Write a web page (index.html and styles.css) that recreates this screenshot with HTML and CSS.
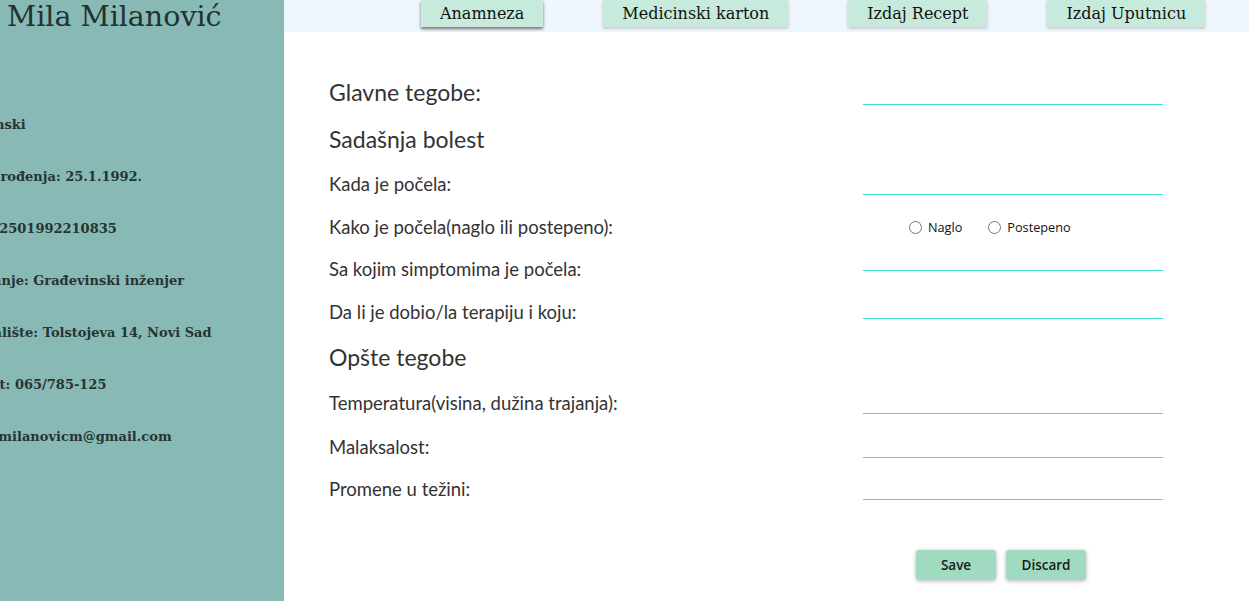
FILE: index.html
```html
<!DOCTYPE html>
<html lang="sr">
<head>
<meta charset="utf-8">
<title>Anamneza</title>
<link rel="stylesheet" href="styles.css">
</head>
<body>
<div class="page">
  <aside class="sidebar">
    <h1 class="patient-name">Mila Milanović</h1>
    <ul class="info">
      <li>Pol: ženski</li>
      <li>Datum rođenja: 25.1.1992.</li>
      <li>JMBG: 2501992210835</li>
      <li>Zanimanje: Građevinski inženjer</li>
      <li>Prebivalište: Tolstojeva 14, Novi Sad</li>
      <li>Kontakt: 065/785-125</li>
      <li>Email: milanovicm@gmail.com</li>
    </ul>
  </aside>
  <main class="main">
    <nav class="tabs">
      <a class="tab tab--active" href="#">Anamneza</a>
      <a class="tab" href="#">Medicinski karton</a>
      <a class="tab" href="#">Izdaj Recept</a>
      <a class="tab" href="#">Izdaj Uputnicu</a>
    </nav>
    <form class="form">
      <div class="row row--r1">
        <label class="label label--big">Glavne tegobe:</label>
        <input class="field" type="text">
      </div>
      <div class="row row--r2">
        <span class="label label--big">Sadašnja bolest</span>
      </div>
      <div class="row row--r3">
        <label class="label">Kada je počela:</label>
        <input class="field" type="text">
      </div>
      <div class="row row--r4">
        <span class="label">Kako je počela(naglo ili postepeno):</span>
        <div class="radios">
          <label class="radio"><input type="radio" name="pocetak"> Naglo</label>
          <label class="radio"><input type="radio" name="pocetak"> Postepeno</label>
        </div>
      </div>
      <div class="row row--r5">
        <label class="label">Sa kojim simptomima je počela:</label>
        <input class="field field--up2" type="text">
      </div>
      <div class="row row--r6">
        <label class="label">Da li je dobio/la terapiju i koju:</label>
        <input class="field field--up1" type="text">
      </div>
      <div class="row row--r7">
        <span class="label label--big">Opšte tegobe</span>
      </div>
      <div class="row row--r8">
        <label class="label">Temperatura(visina, dužina trajanja):</label>
        <input class="field" type="text">
      </div>
      <div class="row row--r9">
        <label class="label">Malaksalost:</label>
        <input class="field" type="text">
      </div>
      <div class="row row--r10">
        <label class="label">Promene u težini:</label>
        <input class="field" type="text">
      </div>
      <div class="actions">
        <button class="btn" type="button">Save</button>
        <button class="btn" type="button">Discard</button>
      </div>
    </form>
  </main>
</div>
</body>
</html>
```
FILE: styles.css
```css
html, body {
  margin: 0;
  padding: 0;
  background: #ffffff;
}

.page {
  display: flex;
  height: 601px;
  overflow: hidden;
}

.sidebar {
  width: 284px;
  flex: 0 0 284px;
  background: #88b9b4;
  overflow: hidden;
  color: #263433;
  font-family: "DejaVu Serif", "Liberation Serif", serif;
}

.patient-name {
  margin: 0;
  padding-left: 7px;
  font-size: 28.5px;
  line-height: 34px;
  font-weight: normal;
  color: #223231;
  white-space: nowrap;
}

.info {
  list-style: none;
  margin: 65px 0 0 -53px;
  padding: 0;
}

.info li {
  height: 52px;
  line-height: 52px;
  font-size: 13px;
  font-weight: bold;
  white-space: nowrap;
}

.main {
  flex: 1;
  display: flex;
  flex-direction: column;
}

.tabs {
  height: 32px;
  background: #eef6fe;
  display: flex;
  align-items: flex-start;
  gap: 60px;
  padding-left: 137px;
}

.tab {
  display: block;
  height: 27px;
  box-sizing: border-box;
  padding: 0 18px;
  line-height: 27px;
  background: #c6eadb;
  border: 1px solid #d7e6df;
  border-top: none;
  color: #111;
  text-decoration: none;
  font-family: "DejaVu Serif", "Liberation Serif", serif;
  font-size: 16px;
  box-shadow: 0 1px 3px rgba(0, 0, 0, 0.25);
  white-space: nowrap;
}

.tab--active {
  box-shadow: 0 2px 3px rgba(0, 0, 0, 0.55);
}

.form {
  padding: 36px 0 0 45px;
  font-family: Lato, "Noto Sans", sans-serif;
  color: #333333;
}

.row {
  display: flex;
  align-items: center;
}

.row--r1 { height: 47px; }
.row--r2 { height: 47px; }
.row--r3 { height: 44px; }
.row--r4 { height: 42px; }
.row--r5 { height: 42px; }
.row--r6 { height: 44px; }
.row--r7 { height: 45px; }
.row--r8 { height: 47px; }
.row--r9 { height: 42px; }
.row--r10 { height: 42px; }

.label {
  width: 534px;
  flex: 0 0 534px;
  font-size: 18.5px;
}

.label--big {
  font-size: 23px;
}

.field {
  width: 300px;
  height: 22px;
  box-sizing: border-box;
  border: none;
  border-bottom: 1px solid #40e0d0;
  padding: 0;
  outline: none;
  background: transparent;
}

.row--r1 .field {
  margin-top: 4px;
}

.field--up2 {
  margin-bottom: 18px;
}

.field--up1 {
  margin-bottom: 8px;
}

.radios {
  display: flex;
  align-items: center;
  gap: 21px;
  padding-left: 41px;
  font-family: "Open Sans", "Noto Sans", sans-serif;
  font-size: 12.7px;
  color: #111;
}

.radio {
  display: flex;
  align-items: center;
}

.radio input {
  margin: 0 6px 0 5px;
}

.actions {
  display: flex;
  gap: 10px;
  margin-top: 40px;
  padding-left: 587px;
}

.btn {
  width: 80px;
  height: 30px;
  border: none;
  border-radius: 3px;
  background: #a0dac0;
  color: #1a1a1a;
  font-family: "Open Sans", "Noto Sans", sans-serif;
  font-size: 13.5px;
  font-weight: 600;
  box-shadow: 0 1px 4px rgba(0, 0, 0, 0.3);
  cursor: pointer;
}
```
